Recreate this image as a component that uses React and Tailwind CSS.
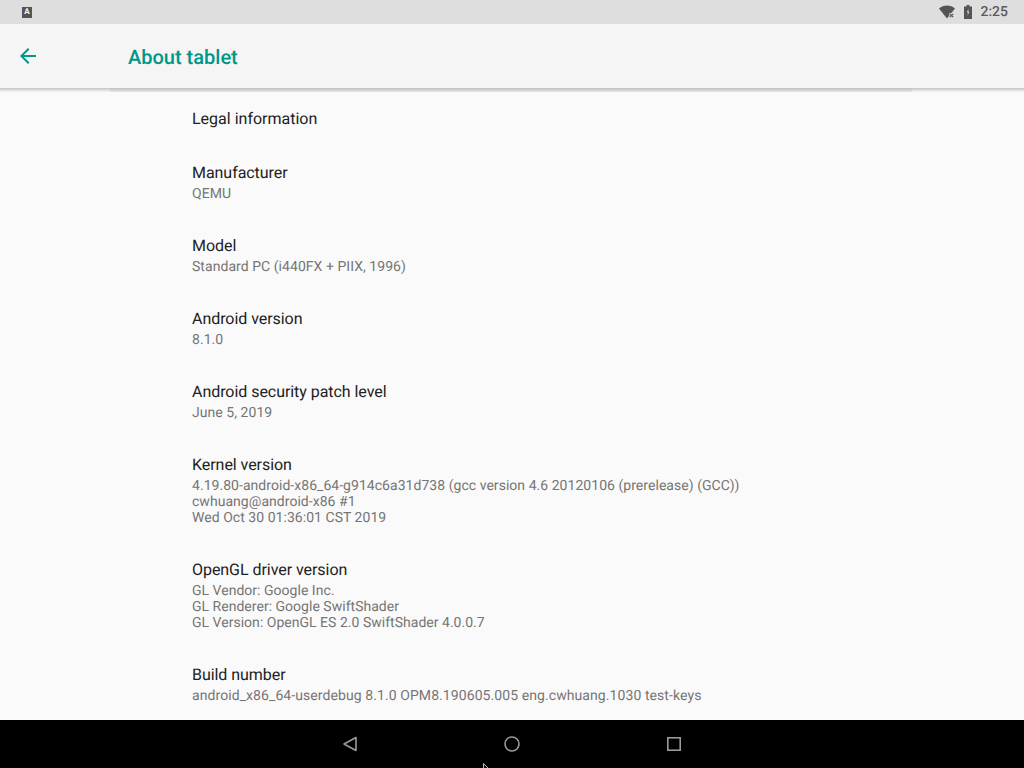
import React from 'react';

const rows = [
  { title: 'Manufacturer', lines: ['QEMU'] },
  { title: 'Model', lines: ['Standard PC (i440FX + PIIX, 1996)'] },
  { title: 'Android version', lines: ['8.1.0'] },
  { title: 'Android security patch level', lines: ['June 5, 2019'] },
  {
    title: 'Kernel version',
    lines: [
      '4.19.80-android-x86_64-g914c6a31d738 (gcc version 4.6 20120106 (prerelease) (GCC))',
      'cwhuang@android-x86 #1',
      'Wed Oct 30 01:36:01 CST 2019',
    ],
    tracking: 'tracking-[0.04px]',
  },
  {
    title: 'OpenGL driver version',
    lines: ['GL Vendor: Google Inc.', 'GL Renderer: Google SwiftShader', 'GL Version: OpenGL ES 2.0 SwiftShader 4.0.0.7'],
    tracking: 'tracking-[0.02px]',
  },
  {
    title: 'Build number',
    lines: ['android_x86_64-userdebug 8.1.0 OPM8.190605.005 eng.cwhuang.1030 test-keys'],
    tracking: 'tracking-[0.08px]',
  },
];

const InfoRow = ({ title, lines, tracking = 'tracking-[0.05px]' }) => (
  <div className="pb-[15px] pl-[192px] pt-[17px]">
    <div className="text-base leading-6 tracking-[-0.05px] text-[#212121]">{title}</div>
    <div className={`mt-px text-sm leading-4 text-[#757575] ${tracking}`}>
      {lines.map((line) => (
        <div key={line}>{line}</div>
      ))}
    </div>
  </div>
);

const App = () => {
  return (
    <div className="relative flex h-[768px] w-[1024px] flex-col overflow-hidden bg-[#fafafa] font-['Roboto',sans-serif] [text-rendering:geometricPrecision]">
      {/* Status bar */}
      <div className="flex h-6 shrink-0 items-center justify-between bg-[#dedede] pl-[22px] pr-4">
        <div className="flex h-[11px] w-[10px] items-center justify-center bg-[#555555] text-[8px] font-bold leading-none text-white">
          A
        </div>
        <div className="flex items-center">
          <svg width="16" height="14" viewBox="0 0 16 14" className="ml-0">
            <path d="M0 3.5C2 1.5 5 0.5 8 0.5s6 1 8 3L8 13.5z" fill="#555555" />
            <path d="M10.5 8.5l4 4m0-4l-4 4" stroke="#dedede" strokeWidth="2.4" />
            <path d="M10.8 8.8l3.4 3.4m0-3.4l-3.4 3.4" stroke="#555555" strokeWidth="1.2" />
          </svg>
          <svg width="8" height="14" viewBox="0 0 8 14" className="ml-[9px]">
            <path d="M2.5 0h3v1.5H8V14H0V1.5h2.5z" fill="#555555" />
            <path d="M4.6 3.5L2.8 7.6h1.3L3.4 11l2-4.4H4.1z" fill="#dedede" />
          </svg>
          <span className="ml-2 text-sm font-medium leading-none text-[#5c5c5c]">2:25</span>
        </div>
      </div>

      {/* Toolbar */}
      <div className="flex h-16 shrink-0 items-center bg-[#f5f5f5]">
        <svg width="24" height="24" viewBox="0 0 24 24" className="ml-4" fill="#009688">
          <path d="M20 11H7.83l5.59-5.59L12 4l-8 8 8 8 1.41-1.41L7.83 13H20v-2z" />
        </svg>
        <span className="ml-[88px] pt-0.5 text-xl font-medium text-[#009688]">About tablet</span>
      </div>
      <div className="h-1 shrink-0 bg-gradient-to-b from-[#c4c4c4] to-[#f6f6f6] pl-[110px] pr-[112px]">
        <div className="h-1 bg-gradient-to-b from-[#bdbdbd] to-[#e8e8e8]"></div>
      </div>

      {/* Rows */}
      <div className="min-h-0 flex-1">
        <div className="pb-[13px] pl-[192px] pt-[15px] text-base leading-6 text-[#212121]">Legal information</div>
        {rows.map((row) => (
          <InfoRow key={row.title} title={row.title} lines={row.lines} tracking={row.tracking} />
        ))}
      </div>

      {/* Navigation bar */}
      <div className="flex h-12 shrink-0 items-center justify-center gap-[134px] bg-black">
        <svg width="28" height="28" viewBox="0 0 28 28" fill="none" stroke="#9a9a9a" strokeWidth="1.6">
          <path d="M20 7.5v13L8 14z" strokeLinejoin="round" />
        </svg>
        <svg width="28" height="28" viewBox="0 0 28 28" fill="none" stroke="#9a9a9a" strokeWidth="1.6">
          <circle cx="14" cy="14" r="7" />
        </svg>
        <svg width="28" height="28" viewBox="0 0 28 28" fill="none" stroke="#9a9a9a" strokeWidth="1.6">
          <rect x="7.8" y="7.8" width="12.4" height="12.4" />
        </svg>
      </div>

      {/* Mouse pointer */}
      <svg width="8" height="6" viewBox="0 0 8 6" className="absolute left-[483px] top-[763px]" fill="#111111" stroke="#bdbdbd">
        <path d="M0.5 0.5L6.5 6.5H0.5z" />
      </svg>
    </div>
  );
};

export default App;
